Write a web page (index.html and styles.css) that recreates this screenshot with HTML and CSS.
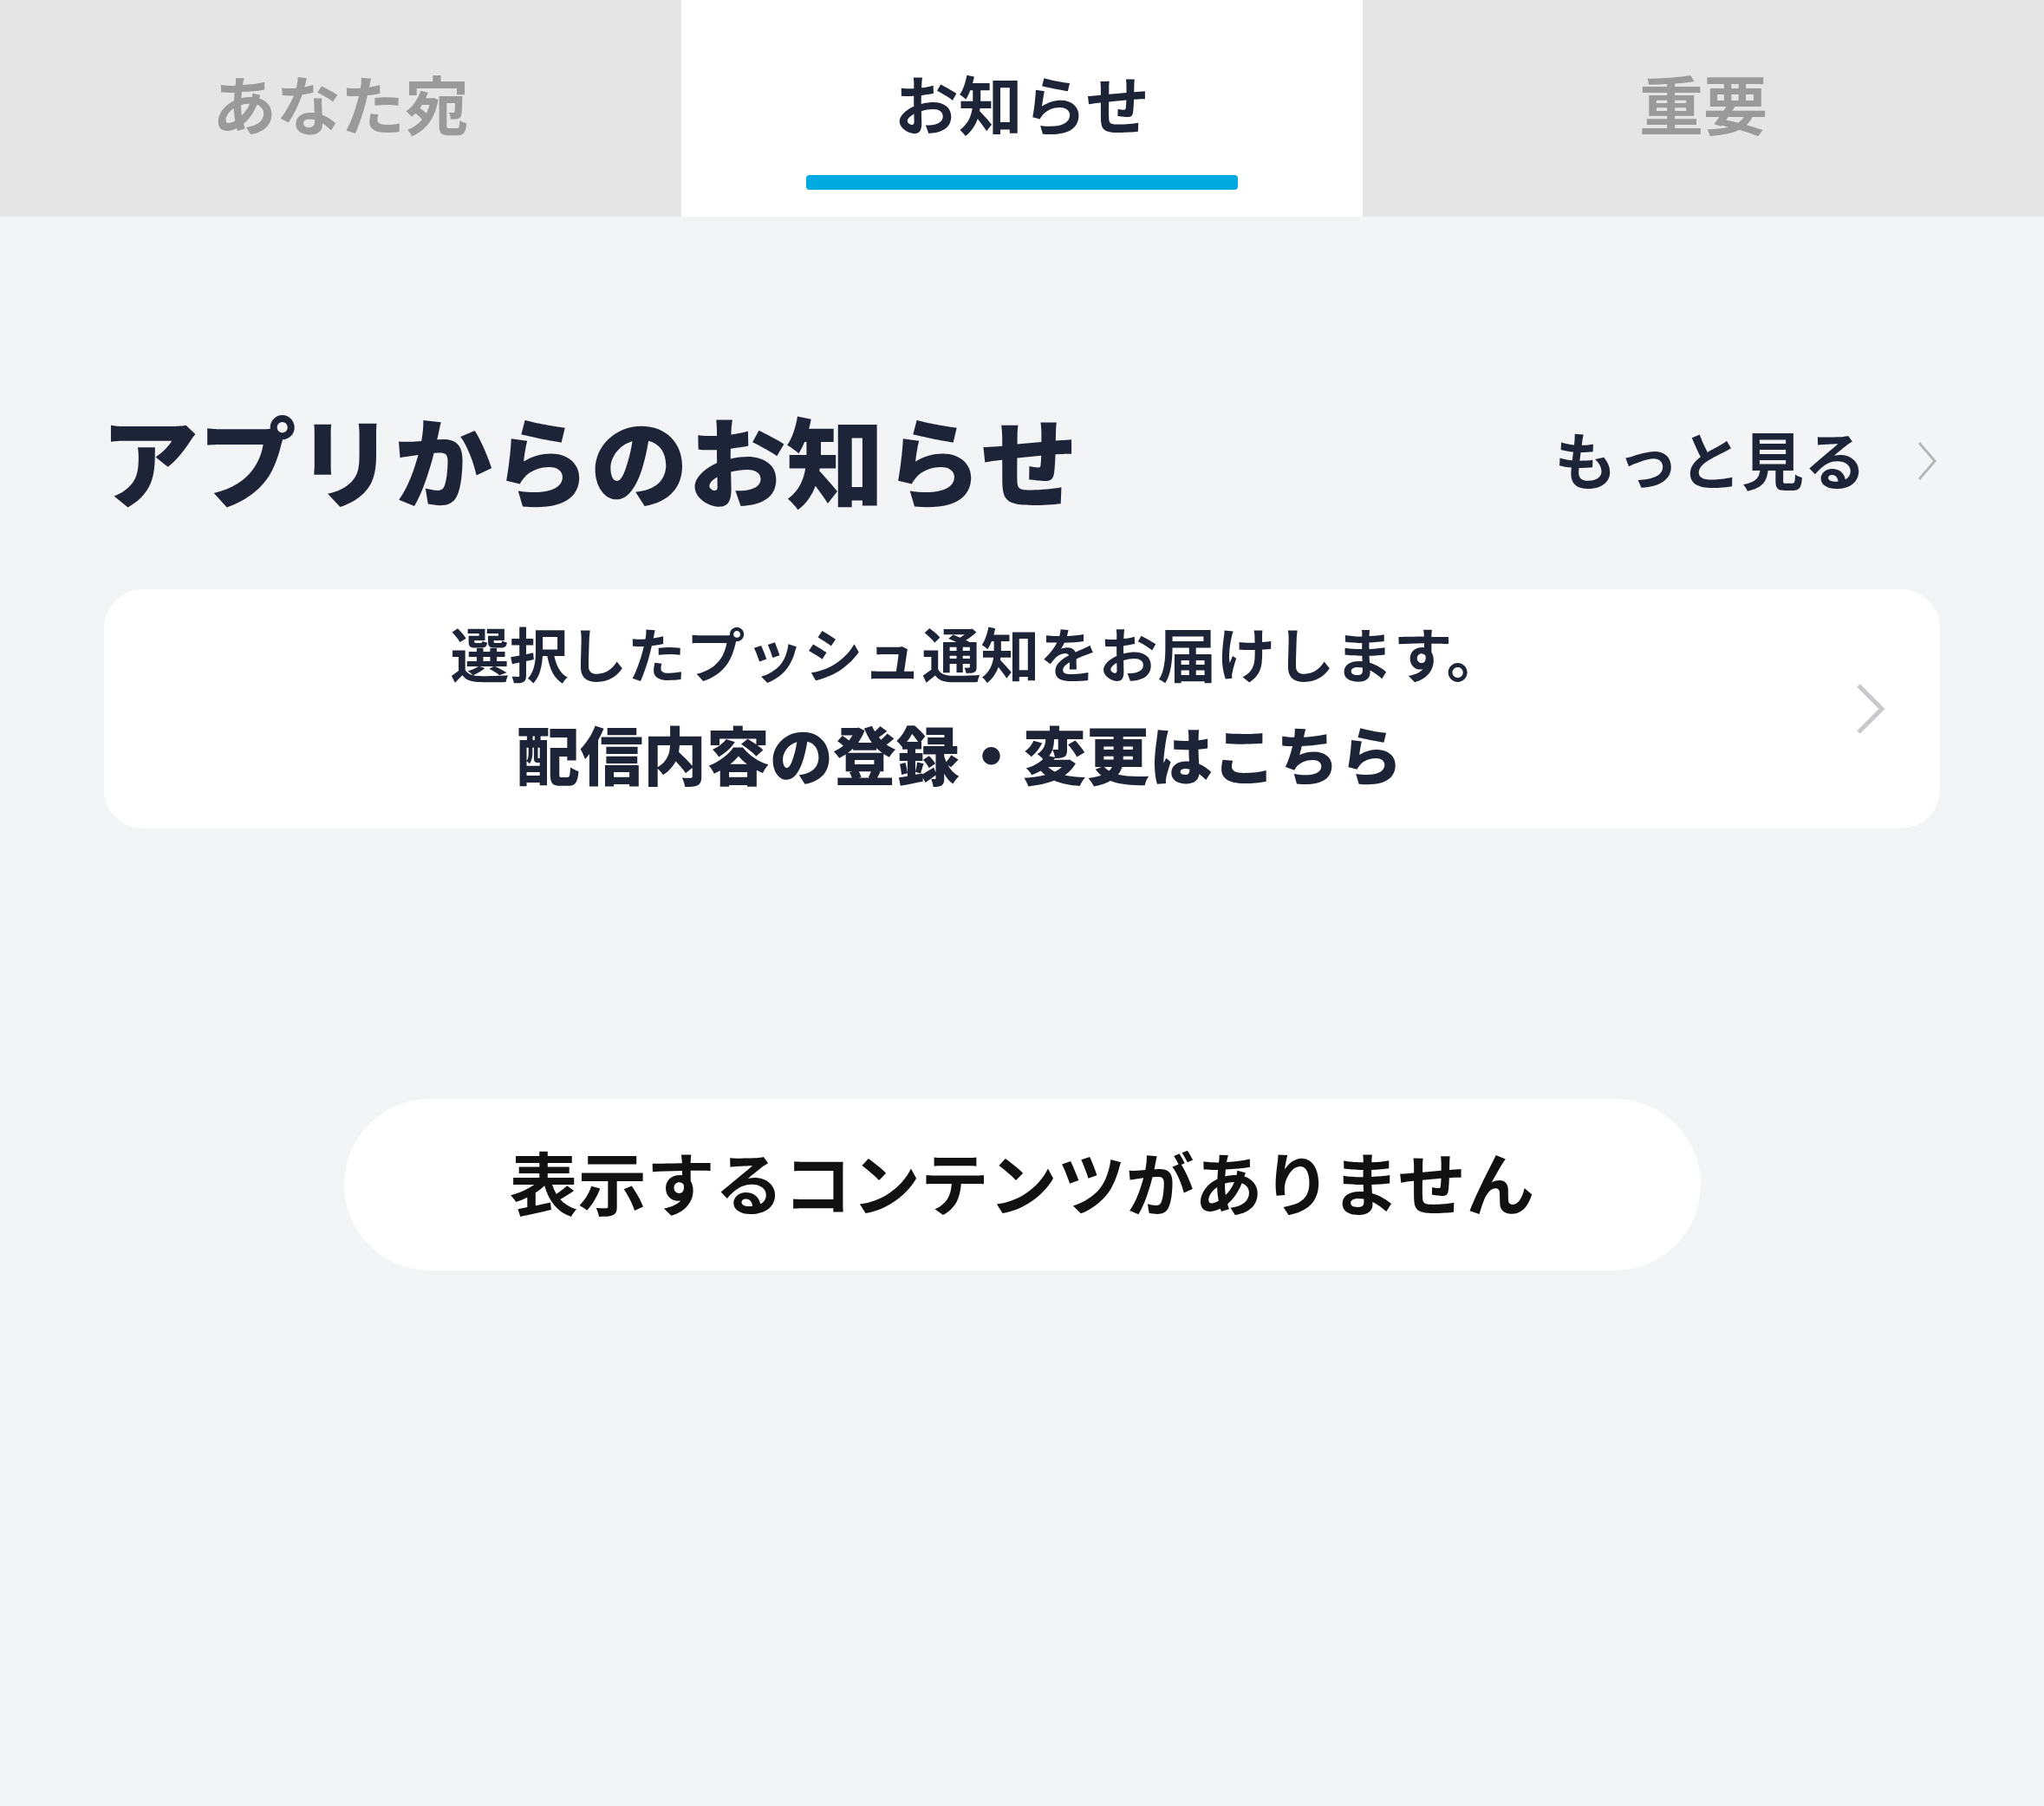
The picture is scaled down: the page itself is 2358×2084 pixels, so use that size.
FILE: index.html
```html
<!DOCTYPE html>
<html lang="ja">
<head>
<meta charset="utf-8">
<title>お知らせ</title>
<link rel="stylesheet" href="styles.css">
</head>
<body>
<nav class="tabs">
  <div class="tab"><span class="tab-label">あなた宛</span><span class="tab-bar"></span></div>
  <div class="tab tab-active"><span class="tab-label">お知らせ</span><span class="tab-bar"></span></div>
  <div class="tab"><span class="tab-label">重要</span><span class="tab-bar"></span></div>
</nav>
<main class="content">
  <header class="section-head">
    <h1 class="section-title">アプリからのお知らせ</h1>
    <a class="more-link">
      <span class="more-text">もっと見る</span>
      <svg class="more-chevron" viewBox="0 0 24 48" aria-hidden="true"><polyline points="3,3 21,24 3,45" fill="none" stroke="#b4b6ba" stroke-width="3"/></svg>
    </a>
  </header>
  <section class="push-card">
    <div class="push-text">
      <p class="push-line1">選択したプッシュ通知をお届けします。</p>
      <p class="push-line2">配信内容の登録・変更はこちら</p>
    </div>
    <div class="push-arrow">
      <svg class="push-chevron" viewBox="0 0 36 60" aria-hidden="true"><polyline points="4,3 31,30 4,57" fill="none" stroke="#c8c9cc" stroke-width="5"/></svg>
    </div>
  </section>
  <div class="empty-wrap">
    <div class="empty-pill"><span class="empty-text">表示するコンテンツがありません</span></div>
  </div>
</main>
</body>
</html>
```
FILE: styles.css
```css
html, body {
  margin: 0;
  padding: 0;
}
body {
  background: #f3f4f6;
  min-height: 2084px;
  font-family: "Noto Sans CJK JP", "Noto Sans", sans-serif;
  color: #1d2437;
}
.tabs {
  display: grid;
  grid-template-columns: 786px 786px 786px;
  height: 250px;
}
.tab {
  background: #e5e5e5;
  display: flex;
  flex-direction: column;
  align-items: center;
  padding-top: 81px;
  box-sizing: border-box;
}
.tab-active {
  background: #ffffff;
}
.tab-label {
  font-size: 74px;
  line-height: 74px;
  font-weight: 700;
  color: #9a9a9a;
}
.tab-active .tab-label {
  color: #1d2437;
}
.tab-bar {
  display: block;
  width: 498px;
  height: 17px;
  margin-top: 47px;
  border-radius: 4px;
  background: transparent;
}
.tab-active .tab-bar {
  background: #00a9df;
}
.content {
  padding: 0 120px;
}
.section-head {
  display: flex;
  align-items: center;
  justify-content: space-between;
  margin-top: 222px;
  height: 112px;
}
.section-title {
  margin: 0 0 0 -4px;
  font-size: 113px;
  line-height: 112px;
  font-weight: 900;
  color: #1d2437;
}
.more-link {
  display: flex;
  align-items: center;
  gap: 58px;
  margin-right: 3px;
  margin-top: 8px;
}
.more-text {
  font-size: 72px;
  line-height: 72px;
  font-weight: 700;
  color: #1d2437;
  position: relative;
  top: -4px;
}
.more-chevron {
  width: 24px;
  height: 48px;
}
.push-card {
  margin-top: 96px;
  background: #ffffff;
  border-radius: 45px;
  height: 276px;
  display: flex;
  align-items: stretch;
}
.push-text {
  flex: 1;
  display: flex;
  flex-direction: column;
  align-items: center;
  padding-top: 33px;
}
.push-line1 {
  margin: 0 0 0 30px;
  font-size: 68px;
  line-height: 80px;
  font-weight: 700;
  color: #1d2437;
}
.push-line2 {
  margin: 35px 12px 0 0;
  font-size: 73px;
  line-height: 80px;
  font-weight: 900;
  color: #1d2437;
}
.push-arrow {
  width: 132px;
  display: flex;
  align-items: center;
  justify-content: flex-end;
  padding-right: 62px;
  box-sizing: border-box;
}
.push-chevron {
  width: 36px;
  height: 60px;
}
.empty-wrap {
  display: flex;
  justify-content: center;
  margin-top: 312px;
}
.empty-pill {
  width: 1565px;
  height: 198px;
  border-radius: 99px;
  background: #ffffff;
  display: flex;
  align-items: center;
  justify-content: center;
}
.empty-text {
  font-size: 79px;
  line-height: 79px;
  font-weight: 700;
  color: #111111;
  position: relative;
  top: -5px;
}
```
